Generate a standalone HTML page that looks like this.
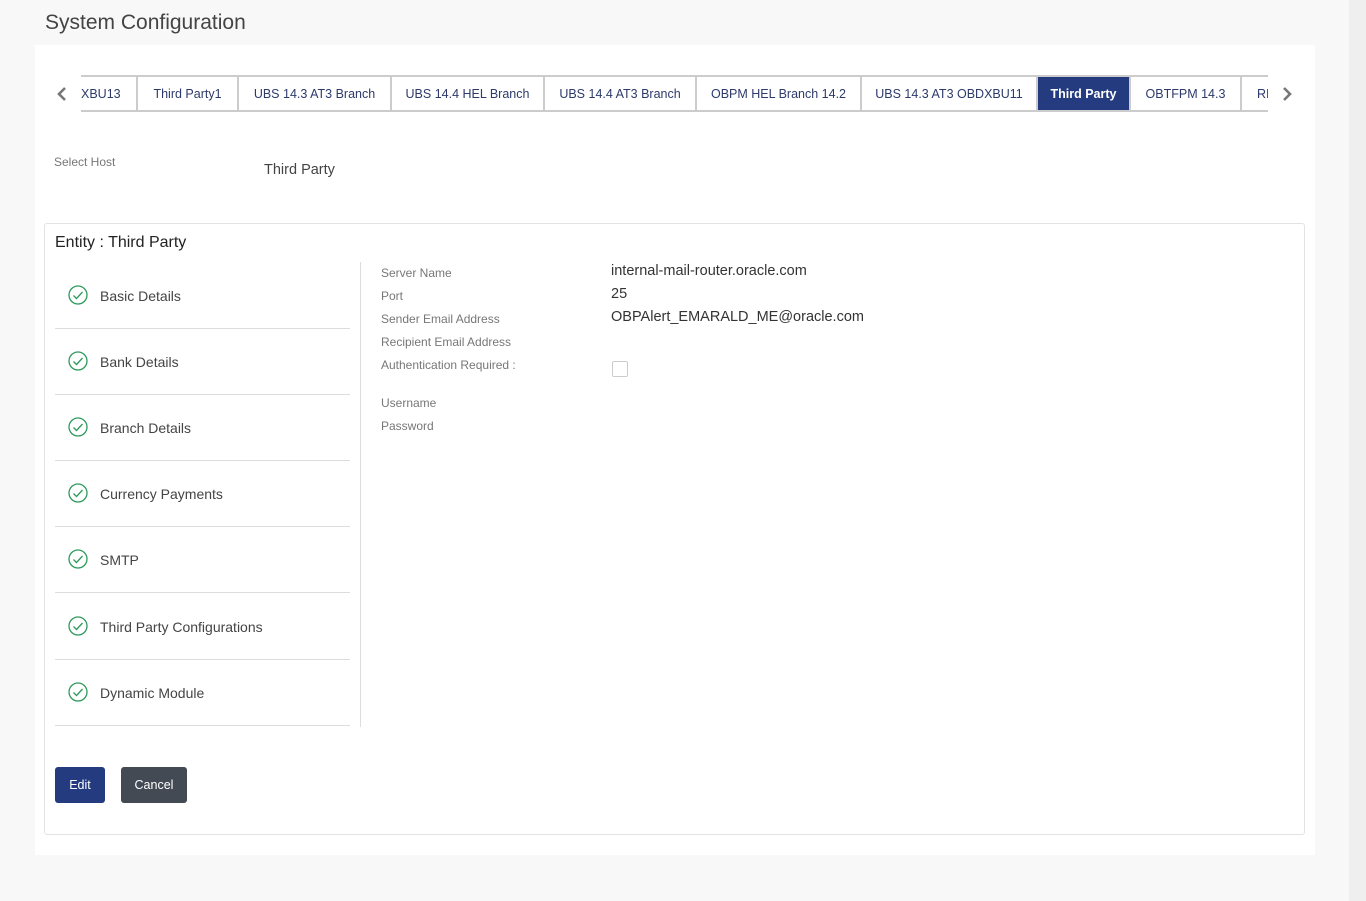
<!DOCTYPE html>
<html><head><meta charset="utf-8"><style>
body{margin:0;width:1366px;height:901px;background:#f8f8f8;font-family:"Liberation Sans",sans-serif;position:relative;overflow:hidden;color:#333}
.strip{position:absolute;left:1349px;top:0;width:17px;height:901px;background:#efefef}
h1{position:absolute;left:45px;top:11px;margin:0;font-weight:normal;font-size:21px;color:#444}
.card{position:absolute;left:35px;top:45px;width:1280px;height:810px;background:#fff}
.tabs{position:absolute;left:81px;top:75px;width:1187px;height:33px;border-top:2px solid #ccc;border-bottom:2px solid #ccc;overflow:hidden;white-space:nowrap;display:flex}
.tab{flex:none;height:33px;line-height:34px;font-size:12.5px;color:#2d3a6b;border-right:2px solid #ccc;text-align:center;box-sizing:border-box}
.tab.act{background:#253b80;color:#fff;font-weight:bold}
.t{position:absolute;white-space:nowrap}
.box{position:absolute;left:44px;top:223px;width:1261px;height:612px;border:1px solid #e3e3e3;border-radius:3px;box-sizing:border-box}
.item{position:absolute;left:55px;width:295px;height:66px;border-bottom:1px solid #ddd}
.item svg{position:absolute;left:13px;top:23px}
.item span{position:absolute;left:45px;top:26px;font-size:14px;color:#444}
.lbl{font-size:12px;color:#777}
.val{font-size:14.5px;color:#333}
.btn{position:absolute;top:767px;height:36px;line-height:36px;color:#fff;font-size:12.5px;text-align:center;border-radius:3px}
</style></head><body>
<div class="strip"></div>
<h1>System Configuration</h1>
<div class="card"></div>
<svg style="position:absolute;left:55px;top:86px" width="14" height="16" viewBox="0 0 14 16"><path d="M10 2L4 8l6 6" fill="none" stroke="#777" stroke-width="2.6"/></svg>
<svg style="position:absolute;left:1280px;top:86px" width="14" height="16" viewBox="0 0 14 16"><path d="M4 2l6 6-6 6" fill="none" stroke="#777" stroke-width="2.6"/></svg>
<div class="tabs">
<div class="tab" style="width:57px;text-align:left">XBU13</div>
<div class="tab" style="width:101px">Third Party1</div>
<div class="tab" style="width:153px">UBS 14.3 AT3 Branch</div>
<div class="tab" style="width:153px">UBS 14.4 HEL Branch</div>
<div class="tab" style="width:152px">UBS 14.4 AT3 Branch</div>
<div class="tab" style="width:165px">OBPM HEL Branch 14.2</div>
<div class="tab" style="width:176px">UBS 14.3 AT3 OBDXBU11</div>
<div class="tab act" style="width:93px">Third Party</div>
<div class="tab" style="width:111px">OBTFPM 14.3</div>
<div class="tab" style="width:60px;text-align:left;padding-left:15px">RI</div>
</div>
<div class="t lbl" style="left:54px;top:155px">Select Host</div>
<div class="t val" style="left:264px;top:162px;color:#444">Third Party</div>
<div class="box"></div>
<div class="t" style="left:55px;top:234px;font-size:16px;color:#222">Entity : Third Party</div>
<div style="position:absolute;left:360px;top:262px;width:1px;height:465px;background:#ddd"></div>
<div class="item" style="top:262px"><svg width="20" height="20" viewBox="0 0 20 20"><circle cx="10" cy="10" r="9" fill="none" stroke="#2e9a5b" stroke-width="1.3"/><path d="M5.5 10.5l3 3 6-6.5" fill="none" stroke="#2e9a5b" stroke-width="1.3"/></svg><span>Basic Details</span></div>
<div class="item" style="top:328px"><svg width="20" height="20" viewBox="0 0 20 20"><circle cx="10" cy="10" r="9" fill="none" stroke="#2e9a5b" stroke-width="1.3"/><path d="M5.5 10.5l3 3 6-6.5" fill="none" stroke="#2e9a5b" stroke-width="1.3"/></svg><span>Bank Details</span></div>
<div class="item" style="top:394px"><svg width="20" height="20" viewBox="0 0 20 20"><circle cx="10" cy="10" r="9" fill="none" stroke="#2e9a5b" stroke-width="1.3"/><path d="M5.5 10.5l3 3 6-6.5" fill="none" stroke="#2e9a5b" stroke-width="1.3"/></svg><span>Branch Details</span></div>
<div class="item" style="top:460px"><svg width="20" height="20" viewBox="0 0 20 20"><circle cx="10" cy="10" r="9" fill="none" stroke="#2e9a5b" stroke-width="1.3"/><path d="M5.5 10.5l3 3 6-6.5" fill="none" stroke="#2e9a5b" stroke-width="1.3"/></svg><span>Currency Payments</span></div>
<div class="item" style="top:526px"><svg width="20" height="20" viewBox="0 0 20 20"><circle cx="10" cy="10" r="9" fill="none" stroke="#2e9a5b" stroke-width="1.3"/><path d="M5.5 10.5l3 3 6-6.5" fill="none" stroke="#2e9a5b" stroke-width="1.3"/></svg><span>SMTP</span></div>
<div class="item" style="top:593px"><svg width="20" height="20" viewBox="0 0 20 20"><circle cx="10" cy="10" r="9" fill="none" stroke="#2e9a5b" stroke-width="1.3"/><path d="M5.5 10.5l3 3 6-6.5" fill="none" stroke="#2e9a5b" stroke-width="1.3"/></svg><span>Third Party Configurations</span></div>
<div class="item" style="top:659px"><svg width="20" height="20" viewBox="0 0 20 20"><circle cx="10" cy="10" r="9" fill="none" stroke="#2e9a5b" stroke-width="1.3"/><path d="M5.5 10.5l3 3 6-6.5" fill="none" stroke="#2e9a5b" stroke-width="1.3"/></svg><span>Dynamic Module</span></div>
<div class="t lbl" style="left:381px;top:266px">Server Name</div>
<div class="t lbl" style="left:381px;top:289px">Port</div>
<div class="t lbl" style="left:381px;top:312px">Sender Email Address</div>
<div class="t lbl" style="left:381px;top:335px">Recipient Email Address</div>
<div class="t lbl" style="left:381px;top:358px">Authentication Required :</div>
<div class="t lbl" style="left:381px;top:396px">Username</div>
<div class="t lbl" style="left:381px;top:419px">Password</div>
<div class="t val" style="left:611px;top:263px">internal-mail-router.oracle.com</div>
<div class="t val" style="left:611px;top:286px">25</div>
<div class="t val" style="left:611px;top:309px">OBPAlert_EMARALD_ME@oracle.com</div>
<div style="position:absolute;left:612px;top:361px;width:14px;height:14px;border:1px solid #ccc;border-radius:2px"></div>
<div class="btn" style="left:55px;width:50px;background:#253b80">Edit</div>
<div class="btn" style="left:121px;width:66px;background:#434a54">Cancel</div>
</body></html>
